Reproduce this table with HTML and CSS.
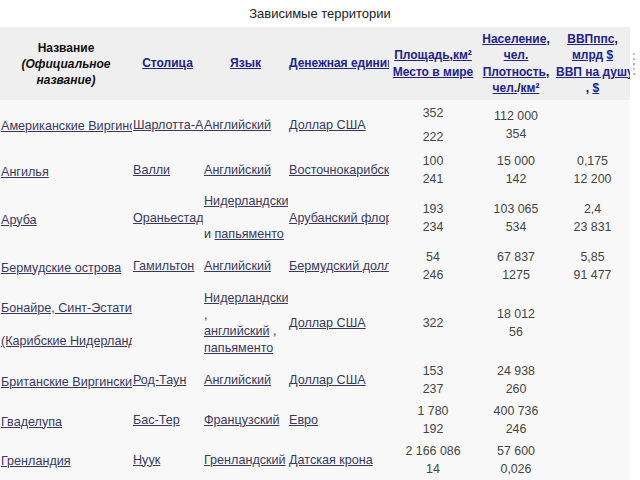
FILE: index.html
```html
<!DOCTYPE html>
<html lang="ru">
<head>
<meta charset="utf-8">
<title>Зависимые территории</title>
<link rel="stylesheet" href="styles.css">
</head>
<body>
<div class="title">Зависимые территории</div>
<table class="terr">
  <colgroup>
    <col class="c-name"><col class="c-cap"><col class="c-lang"><col class="c-cur">
    <col class="c-area"><col class="c-pop"><col class="c-gdp"><col class="c-map">
  </colgroup>
  <thead>
    <tr class="head">
      <th class="plain">Название<br><i>(Официальное название)</i></th>
      <th><a href="#">Столица</a></th>
      <th><a href="#">Язык</a></th>
      <th class="nw"><a href="#">Денежная единица</a></th>
      <th class="nw"><a href="#">Площадь</a>,<a href="#">км²</a><br><a href="#">Место в мире</a></th>
      <th><a href="#">Население</a>,<br><a href="#">чел.</a><br><a href="#">Плотность</a>,<br><a href="#">чел.</a>/<a href="#">км²</a></th>
      <th><a href="#">ВВП</a><a href="#">ппс</a>,<br><a href="#">млрд</a> <a href="#">$</a><br><span class="nw"><a href="#">ВВП на душу</a></span><br>, <a href="#">$</a></th>
      <th class="map">к<br>а<br>р<br>т<br>а</th>
    </tr>
  </thead>
  <tbody>
    <tr class="r1">
      <td class="txt first"><a href="#">Американские Виргинские острова</a></td>
      <td class="txt"><a href="#">Шарлотта-Амалия</a></td>
      <td class="txt"><a href="#">Английский</a></td>
      <td class="txt"><a href="#">Доллар США</a></td>
      <td class="num tall">352<br>222</td>
      <td class="num">112 000<br>354</td>
      <td class="num"></td>
      <td class="map"></td>
    </tr>
    <tr class="r2">
      <td class="txt first"><a href="#">Ангилья</a></td>
      <td class="txt"><a href="#">Валли</a></td>
      <td class="txt"><a href="#">Английский</a></td>
      <td class="txt"><a href="#">Восточнокарибский доллар</a></td>
      <td class="num">100<br>241</td>
      <td class="num">15 000<br>142</td>
      <td class="num">0,175<br>12 200</td>
      <td class="map"></td>
    </tr>
    <tr class="r3">
      <td class="txt first"><a href="#">Аруба</a></td>
      <td class="txt"><a href="#">Ораньестад</a></td>
      <td class="txt ml"><a href="#">Нидерландский</a><br>&nbsp;<br>и <a href="#">папьяменто</a></td>
      <td class="txt"><a href="#">Арубанский флорин</a></td>
      <td class="num">193<br>234</td>
      <td class="num">103 065<br>534</td>
      <td class="num">2,4<br>23 831</td>
      <td class="map"></td>
    </tr>
    <tr class="r4">
      <td class="txt first"><a href="#">Бермудские острова</a></td>
      <td class="txt"><a href="#">Гамильтон</a></td>
      <td class="txt"><a href="#">Английский</a></td>
      <td class="txt"><a href="#">Бермудский доллар</a></td>
      <td class="num">54<br>246</td>
      <td class="num">67 837<br>1275</td>
      <td class="num">5,85<br>91 477</td>
      <td class="map"></td>
    </tr>
    <tr class="r5">
      <td class="txt first ml"><a href="#">Бонайре, Синт-Эстатиус и Саба</a><br>&nbsp;<br><a href="#">(Карибские Нидерланды)</a></td>
      <td class="txt"></td>
      <td class="txt ml"><a href="#">Нидерландский</a><br>,<br><a href="#">английский</a> ,<br><a href="#">папьяменто</a></td>
      <td class="txt"><a href="#">Доллар США</a></td>
      <td class="num">322</td>
      <td class="num">18 012<br>56</td>
      <td class="num"></td>
      <td class="map"></td>
    </tr>
    <tr class="r6">
      <td class="txt first"><a href="#">Британские Виргинские острова</a></td>
      <td class="txt"><a href="#">Род-Таун</a></td>
      <td class="txt"><a href="#">Английский</a></td>
      <td class="txt"><a href="#">Доллар США</a></td>
      <td class="num">153<br>237</td>
      <td class="num">24 938<br>260</td>
      <td class="num"></td>
      <td class="map"></td>
    </tr>
    <tr class="r7">
      <td class="txt first"><a href="#">Гваделупа</a></td>
      <td class="txt"><a href="#">Бас-Тер</a></td>
      <td class="txt"><a href="#">Французский</a></td>
      <td class="txt"><a href="#">Евро</a></td>
      <td class="num">1 780<br>192</td>
      <td class="num">400 736<br>246</td>
      <td class="num"></td>
      <td class="map"></td>
    </tr>
    <tr class="r8">
      <td class="txt first"><a href="#">Гренландия</a></td>
      <td class="txt"><a href="#">Нуук</a></td>
      <td class="txt"><a href="#">Гренландский</a></td>
      <td class="txt"><a href="#">Датская крона</a></td>
      <td class="num">2 166 086<br>14</td>
      <td class="num">57 600<br>0,026</td>
      <td class="num"></td>
      <td class="map"></td>
    </tr>
  </tbody>
</table>
</body>
</html>
```

FILE: styles.css
```css
html, body {
  margin: 0;
  padding: 0;
  background: #ffffff;
  font-family: "Liberation Sans", Arial, sans-serif;
  color: #333;
  overflow: hidden;
}

.title {
  height: 27px;
  line-height: 28px;
  text-align: center;
  font-size: 13px;
  color: #222;
}

.terr {
  width: 640px;
  table-layout: fixed;
  border-collapse: collapse;
  border-spacing: 0;
}

.c-name { width: 132px; }
.c-cap { width: 71px; }
.c-lang { width: 85px; }
.c-cur { width: 101px; }
.c-area { width: 88px; }
.c-pop { width: 78px; }
.c-gdp { width: 75px; }
.c-map { width: 10px; }

.terr th, .terr td {
  padding: 0 1px;
  overflow: hidden;
  vertical-align: middle;
}

.head {
  height: 73px;
  background: #efefef;
}

.head th {
  font-size: 12px;
  font-weight: bold;
  line-height: 16.5px;
  text-align: center;
  color: #111;
}

.head th a {
  color: #22228c;
  text-decoration: underline;
}

.nw { white-space: nowrap; }

.head th.plain { line-height: 16px; }

.head th.map, .terr td.map {
  background: #ffffff;
  font-size: 4px;
  line-height: 5px;
  font-weight: normal;
  color: #444;
  padding: 0 0 0 3px;
  text-align: left;
}

tbody tr { background: #f8f8f9; }

.r1 { height: 49px; }
.r2 { height: 42px; }
.r3 { height: 54px; }
.r4 { height: 42px; }
.r5 { height: 72px; }
.r6 { height: 42px; }
.r7 { height: 38px; }
.r8 { height: 41px; }

td.txt {
  font-size: 12.6px;
  line-height: 16px;
  white-space: nowrap;
  text-align: left;
  color: #333;
}

.terr td.first {
  padding-right: 4px;
  padding-top: 3px;
}

td.txt a {
  color: #38385e;
  text-decoration: underline;
}

td.ml { line-height: 16.5px; }

td.num {
  font-size: 12.4px;
  line-height: 18px;
  text-align: center;
  color: #444;
  white-space: nowrap;
}

td.num.tall { line-height: 24px; }
```
